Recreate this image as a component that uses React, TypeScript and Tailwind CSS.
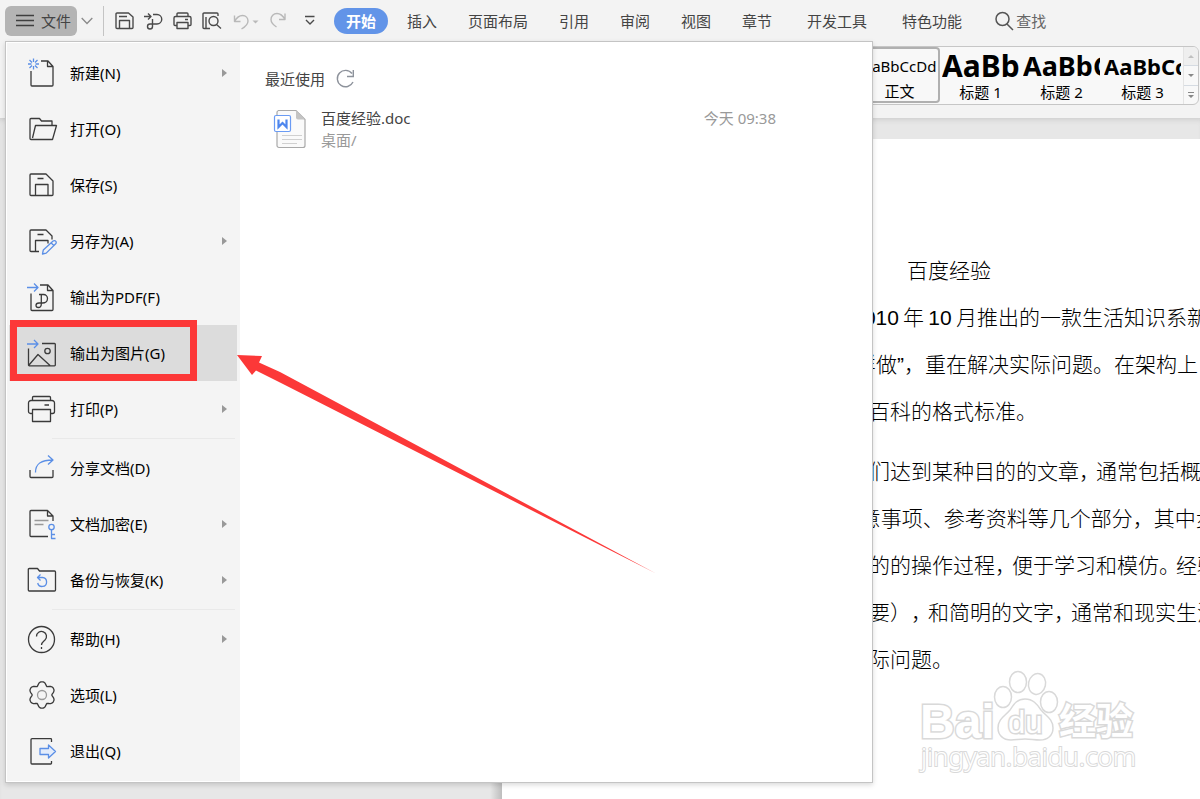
import { ReactNode } from "react";
import clsx from "clsx";

interface MenuEntry {
  label: string;
  icon: ReactNode;
  sub?: boolean;
  active?: boolean;
}

const BLUE = "#5b8fe6";

const Icon32 = ({ children }: { children: ReactNode }) => (
  <svg
    width="32"
    height="32"
    viewBox="0 0 32 32"
    fill="none"
    stroke="#3a3a3a"
    strokeWidth="1.3"
    strokeLinejoin="round"
    className="shrink-0"
  >
    {children}
  </svg>
);

const gearPath = () => {
  const points: string[] = [];
  for (let i = 0; i < 72; i++) {
    const angle = (i * 5 * Math.PI) / 180;
    const radius = 11.8 + 1.7 * Math.cos(6 * angle) - 0.3 * Math.cos(12 * angle);
    points.push(`${(16 + radius * Math.sin(angle)).toFixed(2)},${(16 - radius * Math.cos(angle)).toFixed(2)}`);
  }
  return `M${points.join("L")}Z`;
};

const groups: MenuEntry[][] = [
  [
    {
      label: "新建(N)",
      sub: true,
      icon: (
        <Icon32>
          <path d="M5 14v14a1 1 0 0 0 1 1h20a1 1 0 0 0 1-1V9.500l-5-5.500h-7M21.500 4v5.500H27" />
          <path
            stroke={BLUE}
            d="M7.500 1.500v3.500M7.500 9v3.500M2 7h3.500M9.500 7H13M3.500 3l2.500 2.500M9 8.500l2.500 2.500M11.500 3L9 5.500M6 8.500L3.500 11"
          />
        </Icon32>
      ),
    },
    {
      label: "打开(O)",
      icon: (
        <Icon32>
          <path d="M26 12.500V8H15.500l-2-2.500H5a1 1 0 0 0-1 1V25.500a1 1 0 0 0 1 1H26.500l4-14H9.500L6.500 25" />
        </Icon32>
      ),
    },
    {
      label: "保存(S)",
      icon: (
        <Icon32>
          <path d="M5 5H20l7 7v13.500a1 1 0 0 1-1 1H5a1 1 0 0 1-1-1V6a1 1 0 0 1 1-1zM9.500 26.500v-11h12.500v11M11.500 9.500h6" />
        </Icon32>
      ),
    },
    {
      label: "另存为(A)",
      sub: true,
      icon: (
        <Icon32>
          <path d="M13 26.500H5a1 1 0 0 1-1-1V6a1 1 0 0 1 1-1H20l6 6v3.500M9.500 26.500v-11h12.500v3M11.500 9.500h6" />
          <path
            stroke={BLUE}
            d="M16.500 29l.8-4 9.800-9a1.800 1.800 0 0 1 2.600.2 1.800 1.800 0 0 1 0 2.600l-9.500 9.300zM25 17.700l3 3"
          />
        </Icon32>
      ),
    },
    {
      label: "输出为PDF(F)",
      icon: (
        <Icon32>
          <path d="M5 12.500V28.500a1 1 0 0 0 1 1h20a1 1 0 0 0 1-1V9.500l-5-5.500h-8M21.500 4v5.500H27" />
          <path d="M13 13.500H17.500a4 4 0 0 1 4 4c0 3-2.500 4.500-5 4.500H13c-1.800 0-3 1-3 2.300s1 2.200 2.300 2.200c2.500 0 3-1.500 3-3.500v-9.500" />
          <path stroke={BLUE} d="M1 6.500h11M8 2.500l4 4-4 4" />
        </Icon32>
      ),
    },
    {
      label: "输出为图片(G)",
      active: true,
      icon: (
        <Icon32>
          <path d="M2.500 11.500V28a.8.800 0 0 0 .8.800h25.200a.8.800 0 0 0 .8-.8V7.300a.8.800 0 0 0-.8-.8H16M3 28l9-10.500L24 28.500" />
          <circle cx="21.500" cy="14" r="2.700" />
          <path stroke={BLUE} d="M1 7h11M8 3l4 4-4 4" />
        </Icon32>
      ),
    },
    {
      label: "打印(P)",
      sub: true,
      icon: (
        <Icon32>
          <path d="M6.500 20.500H4.500a2 2 0 0 1-2-2V10a2.500 2.500 0 0 1 2.500-2.500H26a2.500 2.500 0 0 1 2.500 2.500v8.500a2 2 0 0 1-2 2H24.500M6.500 7.500v-3a1 1 0 0 1 1-1H23.500a1 1 0 0 1 1 1v3M6.500 16.500h18v12h-18zM18.500 12H23" />
        </Icon32>
      ),
    },
  ],
  [
    {
      label: "分享文档(D)",
      icon: (
        <Icon32>
          <path d="M4 18v6.500a1 1 0 0 0 1 1H26a1 1 0 0 0 1-1V18" />
          <path stroke={BLUE} d="M9.500 20.500C9.500 12 14.500 8 27 8M22 3.500l5 4.500-5 4.500" />
        </Icon32>
      ),
    },
    {
      label: "文档加密(E)",
      sub: true,
      icon: (
        <Icon32>
          <path d="M22 28.500H5a1 1 0 0 1-1-1V3.500a1 1 0 0 1 1-1H21.500L27 8v5M21.500 2.500V8H27" />
          <path stroke="#999" d="M8.500 12.500h14M8.500 16.500h9" />
          <g stroke={BLUE}>
            <circle cx="25.500" cy="19" r="2.700" />
            <path d="M25.500 21.700V30.500H29.500M25.500 26.500h3.500" />
          </g>
        </Icon32>
      ),
    },
    {
      label: "备份与恢复(K)",
      sub: true,
      icon: (
        <Icon32>
          <path d="M3.300 4.500H11.500l2 2.500H28.500a1 1 0 0 1 1 1V26a1 1 0 0 1-1 1H3.300a1 1 0 0 1-1-1V5.500a1 1 0 0 1 1-1z" />
          <path stroke={BLUE} d="M14.500 10.500l-3 3 3 3M11.500 13.500h5a4.500 4.500 0 1 1-4.800 5.500" />
        </Icon32>
      ),
    },
  ],
  [
    {
      label: "帮助(H)",
      sub: true,
      icon: (
        <Icon32>
          <circle cx="15.500" cy="16.500" r="13" />
          <path d="M10.500 13.500a5 5 0 1 1 8.500 3.500c-2 1.700-3.500 2.500-3.500 5M15.500 24v2" />
        </Icon32>
      ),
    },
    {
      label: "选项(L)",
      icon: (
        <Icon32>
          <path d={gearPath()} />
          <circle cx="16" cy="16" r="4.500" stroke="#999" />
        </Icon32>
      ),
    },
    {
      label: "退出(Q)",
      icon: (
        <Icon32>
          <path d="M25.500 7V4.500a.8.800 0 0 0-.8-.8H6a1 1 0 0 0-1 1V28a1 1 0 0 0 1 1H24.700a.8.800 0 0 0 .8-.8V26" />
          <path stroke={BLUE} fill="#e3ecfb" d="M14 13.500h8.500v-3.500l7 6.500-7 6.500v-3.500H14z" />
        </Icon32>
      ),
    },
  ],
];

const tabs = ["插入", "页面布局", "引用", "审阅", "视图", "章节"];
const extraTabs = ["开发工具", "特色功能"];

const styles = [
  { name: "正文", sample: "AaBbCcDd", look: "text-[15px] justify-center", selected: true },
  { name: "标题 1", sample: "AaBb", look: "text-[30px] font-bold" },
  { name: "标题 2", sample: "AaBbC", look: "text-[27px] font-bold" },
  { name: "标题 3", sample: "AaBbCc", look: "text-[22px] font-bold" },
];

// "|" marks punctuation that is set tight against the next character
const paragraphs = [
  [
    "于\u20092010\u2009年\u200910\u2009月推出的一款生活知识系新产品。",
    "“怎样做”，重在解决实际问题。在架构上，整合",
    "百度百科的格式标准。",
  ],
  [
    "助人们达到某种目的的文章，|通常包括概述、",
    "  注意事项、参考资料等几个部分，其中步骤",
    "种目的的操作过程，|便于学习和模仿。|经验要",
    "必需要），|和简明的文字，|通常和现实生活",
    "决实际问题。",
  ],
];

const QuickButton = ({ label, width, children }: { label: string; width: number; children: ReactNode }) => (
  <button aria-label={label} className="shrink-0">
    <svg
      width={width}
      height="20"
      viewBox={`0 0 ${width} 20`}
      fill="none"
      stroke="#4a4a4a"
      strokeWidth="1.4"
      strokeLinejoin="round"
    >
      {children}
    </svg>
  </button>
);

const TitleBar = () => (
  <div className="flex h-[42px] items-center whitespace-nowrap pl-[5px] text-[#444]">
    <button className="flex h-[30px] w-[72px] items-center gap-[7px] rounded-md bg-[#b4b4b4] pl-[11px]">
      <svg width="18" height="14" viewBox="0 0 18 14" stroke="#3f3f3f" strokeWidth="1.4">
        <path d="M0 1.500h18M0 6.500h18M0 11.500h18" />
      </svg>
      文件
    </button>
    <button aria-label="展开" className="ml-1">
      <svg width="12" height="8" viewBox="0 0 12 8" fill="none" stroke="#8a8a8a" strokeWidth="1.3">
        <path d="M.7 1L6 6.500 11.300 1" />
      </svg>
    </button>
    <div className="ml-[10px] h-[30px] w-px bg-[#c4c4c4]" />
    <div className="ml-[11px] flex items-center gap-[10px]">
      <QuickButton label="保存" width={19}>
        <path d="M2 2H13.500L18 6v10.500a1 1 0 0 1-1 1H2a1 1 0 0 1-1-1V3a1 1 0 0 1 1-1zM4.500 17.500V9.500h10v8M4 5.500h8" />
      </QuickButton>
      <QuickButton label="输出为PDF" width={19}>
        <path d="M0 5.500h7M4 2.500l3 3-3 3M9 3.500h4a4.500 4.500 0 0 1 0 9.500H6a2.500 2.500 0 1 0 2.500 2.500V8" />
      </QuickButton>
      <QuickButton label="打印" width={19}>
        <path d="M4 14.500H2a1 1 0 0 1-1-1V7a1.500 1.500 0 0 1 1.500-1.500h14A1.500 1.500 0 0 1 18 7v6.500a1 1 0 0 1-1 1h-2M4 5.500V3a1 1 0 0 1 1-1h9a1 1 0 0 1 1 1v2.500M4 11.500h11v6H4zM12 8.500h3" />
      </QuickButton>
      <QuickButton label="打印预览" width={20}>
        <path d="M8 17.500H2a1 1 0 0 1-1-1V3a1 1 0 0 1 1-1h13a1 1 0 0 1 1 1v2M4 17.500V6" />
        <circle cx="11.500" cy="10" r="4.500" />
        <path d="M14.500 13.500l4.500 4" />
      </QuickButton>
    </div>
    <div className="ml-[11px] flex items-center">
      <QuickButton label="撤销" width={17}>
        <path stroke="#b9b9b9" d="M1.500 4.500v6h6M1.500 10.500C4 6 7 4.500 9.500 4.500c3.500 0 5.500 2.500 5.500 5.500 0 4-3 6-6.500 8" />
      </QuickButton>
      <QuickButton label="撤销列表" width={10}>
        <path stroke="none" fill="#b9b9b9" d="M2.500 9.500h6l-3 3z" />
      </QuickButton>
      <div className="ml-[10px]">
        <QuickButton label="恢复" width={17}>
          <path stroke="#b9b9b9" d="M15 4.500v6H9M15 10.500C12.500 6 9.500 4.500 7 4.500 3.500 4.500 1 7 1 10.500c0 3.500 2.500 5.500 5.500 7.500" />
        </QuickButton>
      </div>
    </div>
    <div className="ml-[18px]">
      <QuickButton label="更多" width={10}>
        <path d="M0 7.500h9.500M1 11l4 4 4-4" />
      </QuickButton>
    </div>
    <nav className="ml-[19px] flex items-center gap-[31px]">
      <button className="-mr-3 h-[26px] w-[54px] rounded-full bg-[#6294e8] font-bold text-white">开始</button>
      {tabs.map((tab) => (
        <button key={tab}>{tab}</button>
      ))}
    </nav>
    <nav className="ml-[35px] flex items-center gap-[35px]">
      {extraTabs.map((tab) => (
        <button key={tab}>{tab}</button>
      ))}
    </nav>
    <button className="ml-[33px] flex items-center gap-[2px] text-[#666]">
      <svg width="19" height="20" viewBox="0 0 19 20" fill="none" stroke="#555" strokeWidth="1.500">
        <circle cx="7.500" cy="8" r="6.500" />
        <path d="M12 13l6 6" />
      </svg>
      查找
    </button>
  </div>
);

const StyleGallery = () => (
  <div className="flex justify-end pb-[13px] pr-px pt-1">
    <div className="flex h-[59px] overflow-hidden rounded-md border border-[#c6c6c6] bg-[#f8f8f8]">
      {styles.map(({ name, sample, look, selected }) => (
        <button
          key={name}
          className={clsx(
            "flex w-[81px] flex-col items-center overflow-hidden text-black",
            selected && "h-[56px] rounded-sm border-2 border-[#b0b0b0]"
          )}
        >
          <span
            className={clsx(
              "flex w-[77px] shrink-0 items-center overflow-hidden whitespace-nowrap",
              selected ? "h-[34px]" : "h-[37px]",
              look
            )}
          >
            {sample}
          </span>
          <span className="leading-4">{name}</span>
        </button>
      ))}
      <div className="flex w-[15px] flex-col divide-y divide-[#d5dbe2] border-l border-[#e4e4e4]">
        <button aria-label="上一行" className="flex flex-1 items-center justify-center bg-[#efefef]">
          <svg width="6" height="3" viewBox="0 0 6 3" fill="#c0c0c0">
            <path d="M0 3h6L3 0z" />
          </svg>
        </button>
        <button aria-label="下一行" className="flex flex-1 items-center justify-center">
          <svg width="6" height="3" viewBox="0 0 6 3" fill="#888">
            <path d="M0 0h6L3 3z" />
          </svg>
        </button>
        <button aria-label="更多样式" className="flex flex-1 items-center justify-center">
          <svg width="6" height="6" viewBox="0 0 6 6" fill="#888">
            <path d="M0 0h6v1H0zM0 3h6L3 6z" />
          </svg>
        </button>
      </div>
    </div>
  </div>
);

const Watermark = () => (
  <svg
    width="225"
    height="110"
    viewBox="0 0 225 110"
    className="absolute bottom-6 right-[60px]"
    fill="#fff"
    stroke="#d9d9d9"
    strokeWidth="1.500"
  >
    <g fontWeight="bold" strokeWidth="3" paintOrder="stroke" className="font-['Liberation_Sans','Noto_Sans_CJK_SC',sans-serif]">
      <text x="5" y="73" fontSize="48">
        Bai
      </text>
      <text x="144" y="70" fontSize="37">
        经验
      </text>
    </g>
    <ellipse cx="88" cy="32" rx="8.500" ry="10.500" />
    <ellipse cx="103" cy="17" rx="8.500" ry="10.500" />
    <ellipse cx="122" cy="19" rx="8.500" ry="10.500" transform="rotate(12 122 19)" />
    <ellipse cx="134" cy="37" rx="8.500" ry="10.500" />
    <path d="M110 34c8 0 12 5 16 11 5 6 12 9 12 18 0 8-6 12-13 12-6 0-9-1-15-1s-9 1-14 1c-8 0-13-5-13-12 0-9 7-12 12-18 4-6 7-11 15-11z" />
    <g paintOrder="stroke">
      <text x="93" y="68" fontSize="31" strokeWidth="3" className="font-['Liberation_Sans',sans-serif]">
        du
      </text>
      <text x="6" y="101" fontSize="26" strokeWidth="2" className="font-['Noto_Sans',sans-serif]">
        jingyan.baidu.com
      </text>
    </g>
  </svg>
);

const DocumentPage = () => (
  <main className="flex flex-1 bg-[#e7e7e7] pl-[490px] pt-[21px] shadow-[inset_0_5px_5px_-3px_#cfcfcf]">
    <div className="w-3 shrink-0 bg-linear-to-r from-[#e7e7e7] to-[#bdbdbd]" />
    <article className="relative min-w-0 flex-1 overflow-hidden whitespace-pre bg-white pl-[325px] pt-[108px] font-['Liberation_Sans','Noto_Sans_CJK_SC',sans-serif] text-[21px] font-light leading-[47px] text-black [text-spacing-trim:space-all]">
      <h1 className="pl-[80px]">百度经验</h1>
      {paragraphs.map((lines, index) => (
        <div key={index} className="mb-[13px]">
          {lines.map((line) => (
            <p key={line}>
              {line.split("|").map((part) => (
                <span key={part} className="-mr-1">
                  {part}
                </span>
              ))}
            </p>
          ))}
        </div>
      ))}
      <Watermark />
    </article>
  </main>
);

const MenuItem = ({ label, icon, sub, active }: MenuEntry) => (
  <button className={clsx("flex h-14 w-full items-center pl-[17px] pr-[10px] text-left text-black", active && "bg-[#dcdcdc]")}>
    {icon}
    <span className="ml-3 flex-1">{label}</span>
    {sub ? (
      <svg width="5" height="8" viewBox="0 0 5 8" fill="#999">
        <path d="M0 0l5 4-5 4z" />
      </svg>
    ) : null}
  </button>
);

const RecentFiles = () => (
  <section className="flex-1 pl-[25px] pt-[26px]">
    <div className="flex h-[22px] items-center gap-[10px] text-[#444]">
      <h2>最近使用</h2>
      <button aria-label="刷新">
        <svg width="20" height="20" viewBox="0 0 20 20" fill="none" stroke="#8d929b" strokeWidth="1.400">
          <path d="M17 4.500A8.200 8.200 0 1 0 18 13M18.300 1v6.500H12" />
        </svg>
      </button>
    </div>
    <a href="#" className="mt-[17px] flex items-start pl-2 pr-24">
      <svg width="34" height="42" viewBox="0 0 34 42" fill="none">
        <path
          d="M5 3.500h18l9 9v26a2 2 0 0 1-2 2H6a2 2 0 0 1-2-2v-33a2 2 0 0 1 2-2z"
          fill="#fafafa"
          stroke="#a9a9a9"
          strokeWidth="1.200"
        />
        <path d="M23 3.500l9 9h-7a2 2 0 0 1-2-2z" fill="#c4c4c4" />
        <path d="M9 28.500h20M9 32.500h20M9 36.500h15" stroke="#d0d0d0" />
        <rect x="1.500" y="8.500" width="16" height="16" rx="1.500" fill="#fff" stroke="#6a9bf4" strokeWidth="1.200" />
        <path d="M5.500 12.500V20l4-4 4 4v-7.500" stroke="#4d86ee" strokeWidth="2.200" />
      </svg>
      <div className="ml-[14px] flex-1 leading-[22px]">
        <p className="text-[#444]">百度经验.doc</p>
        <p className="text-[#999]">桌面/</p>
      </div>
      <time className="leading-[22px] text-[#999]">今天 09:38</time>
    </a>
  </section>
);

const FileMenu = () => (
  <div className="absolute left-[5px] top-[41px] flex w-[868px] border border-[#c4c4c4] bg-white shadow-[0_2px_5px_rgba(0,0,0,0.15)]">
    <aside className="w-[234px] shrink-0 border-y border-l border-white bg-[#f4f4f4] py-[2px] pl-[2px] pr-[3px]">
      {groups.map((items, index) => (
        <div key={index}>
          {index > 0 ? (
            <div className="ml-[43px] mr-[2px] py-px">
              <div className="h-px bg-[#e9e9e9]" />
            </div>
          ) : null}
          {items.map((item) => (
            <MenuItem key={item.label} {...item} />
          ))}
        </div>
      ))}
    </aside>
    <RecentFiles />
  </div>
);

const Callout = () => (
  <>
    <div className="pointer-events-none absolute left-[10px] top-[320px] h-[61px] w-[187px] border-7 border-[#fc3838]" />
    <svg
      width="420"
      height="220"
      viewBox="0 0 420 220"
      fill="#fc3838"
      className="pointer-events-none absolute left-[237px] top-[355px]"
    >
      <path d="M0 0L25 1 22 7.500 43 17 419 218.500 43 27.500 19 15.500 15 20z" />
    </svg>
  </>
);

const App = () => {
  return (
    <div className="relative flex min-h-screen flex-col overflow-hidden bg-[#f3f3f3] font-['Noto_Sans','Noto_Sans_CJK_SC',sans-serif] text-[15px] leading-5">
      <header>
        <TitleBar />
        <StyleGallery />
      </header>
      <DocumentPage />
      <FileMenu />
      <Callout />
    </div>
  );
};

export default App;
